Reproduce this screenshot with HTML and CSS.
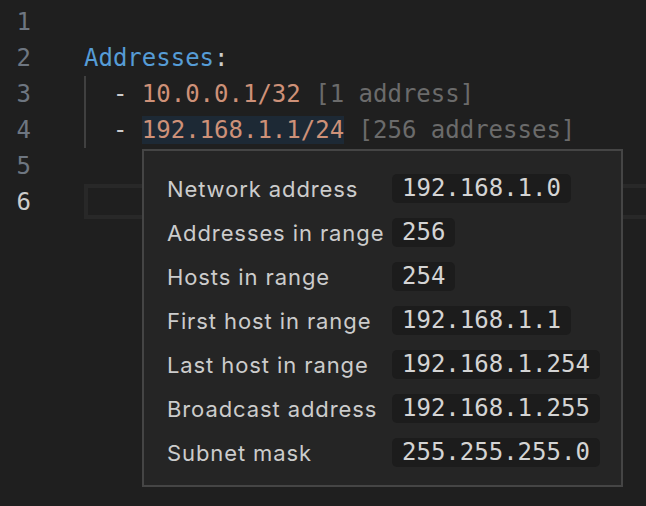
FILE: index.html
```html
<!DOCTYPE html>
<html>
<head>
<meta charset="utf-8">
<link rel="stylesheet" href="styles.css">
</head>
<body>
<div class="editor">
  <div class="line"><span class="ln">1</span><span class="code"></span></div>
  <div class="line"><span class="ln">2</span><span class="code"><span class="key">Addresses</span><span class="punc">:</span></span></div>
  <div class="line"><span class="ln">3</span><span class="code guide">  <span class="punc">-</span> <span class="num">10.0.0.1/32</span> <span class="hint">[1 address]</span></span></div>
  <div class="line"><span class="ln">4</span><span class="code guide">  <span class="punc">-</span> <span class="num hl">192.168.1.1/24</span> <span class="hint">[256 addresses]</span></span></div>
  <div class="line"><span class="ln">5</span><span class="code"></span></div>
  <div class="line current"><span class="ln">6</span><span class="code"><span class="cur-box"></span></span></div>

  <div class="hover">
    <div class="table">
      <span class="label">Network address</span><span class="val">192.168.1.0</span>
      <span class="label">Addresses in range</span><span class="val">256</span>
      <span class="label">Hosts in range</span><span class="val">254</span>
      <span class="label">First host in range</span><span class="val">192.168.1.1</span>
      <span class="label">Last host in range</span><span class="val">192.168.1.254</span>
      <span class="label">Broadcast address</span><span class="val">192.168.1.255</span>
      <span class="label">Subnet mask</span><span class="val">255.255.255.0</span>
    </div>
  </div>
</div>
</body>
</html>
```
FILE: styles.css
```css
html, body {
  margin: 0;
  padding: 0;
  background: #1f1f1f;
  overflow: hidden;
}

.editor {
  position: relative;
  width: 646px;
  height: 506px;
  padding-top: 4px;
  box-sizing: border-box;
  font-family: "DejaVu Sans Mono", "Liberation Mono", monospace;
  font-size: 24px;
  color: #cccccc;
}

.line {
  display: flex;
  height: 36px;
  line-height: 36px;
  white-space: pre;
}

.ln {
  width: 31px;
  text-align: right;
  color: #6e7681;
  flex: none;
}

.current .ln {
  color: #cccccc;
}

.code {
  margin-left: 53px;
  flex: 1;
  position: relative;
}

.guide {
  box-shadow: inset 2px 0 0 #404040;
}

.key { color: #569cd6; }
.punc { color: #cccccc; }
.num { color: #ce9178; }
.hl { background: #1d2935; }
.hint { color: #6b6b6b; }

.cur-box {
  display: block;
  height: 35px;
  margin-right: -20px;
  border: 4px solid #282828;
  box-sizing: border-box;
}

.hover {
  position: absolute;
  left: 142px;
  top: 149px;
  width: 481px;
  box-sizing: border-box;
  background: #252525;
  border: 2px solid #454545;
  padding: 23px 22px 18px 23px;
}

.table {
  display: grid;
  grid-template-columns: 215px auto;
  column-gap: 10px;
  row-gap: 15px;
  align-items: center;
  justify-items: start;
}

.label {
  font-family: "Inter", "Noto Sans", sans-serif;
  font-size: 22px;
  letter-spacing: 0.9px;
  color: #cccccc;
  white-space: nowrap;
}

.val {
  font-family: "DejaVu Sans Mono", "Liberation Mono", monospace;
  font-size: 24px;
  color: #d4d4d4;
  background: #1c1c1c;
  height: 29px;
  line-height: 29px;
  padding: 0 10px;
  border-radius: 5px;
}
```
